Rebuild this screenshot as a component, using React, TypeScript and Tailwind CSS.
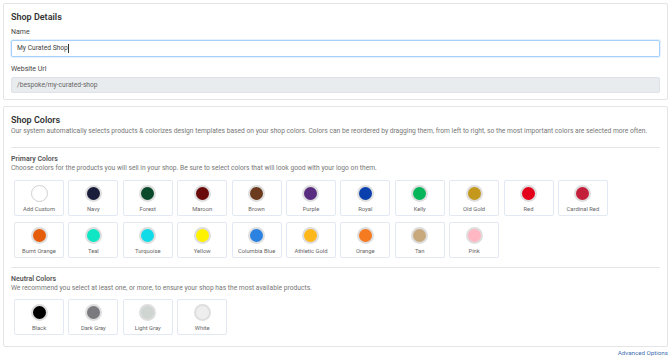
import React from 'react';

const primary = [
  { name: 'Navy', hex: '#1b1e3a' },
  { name: 'Forest', hex: '#0a4a2a' },
  { name: 'Maroon', hex: '#6a0b0b' },
  { name: 'Brown', hex: '#6c3a1c' },
  { name: 'Purple', hex: '#5a2c80' },
  { name: 'Royal', hex: '#0a40ad' },
  { name: 'Kelly', hex: '#06b45a' },
  { name: 'Old Gold', hex: '#c3981d' },
  { name: 'Red', hex: '#e2001a' },
  { name: 'Cardinal Red', hex: '#c31f3a' },
  { name: 'Burnt Orange', hex: '#e55c0a' },
  { name: 'Teal', hex: '#0fe6c4' },
  { name: 'Turquoise', hex: '#12dbe8' },
  { name: 'Yellow', hex: '#fff200' },
  { name: 'Columbia Blue', hex: '#2c82e0' },
  { name: 'Athletic Gold', hex: '#ffb81c' },
  { name: 'Orange', hex: '#f57a20' },
  { name: 'Tan', hex: '#c8a97e' },
  { name: 'Pink', hex: '#ffb7c3' },
];

const neutral = [
  { name: 'Black', hex: '#000000' },
  { name: 'Dark Gray', hex: '#7b7b7f' },
  { name: 'Light Gray', hex: '#cfd5d0' },
  { name: 'White', hex: '#eeeeee' },
];

function Swatch({ name, hex }: { name: string; hex?: string }) {
  return (
    <div className="w-[50px] h-[36px] border border-[#e3e9f3] rounded-[2px] bg-white flex flex-col items-center pt-[4px]">
      {hex ? (
        <span className="w-[17px] h-[17px] rounded-full border-[2px] border-[#dedede]" style={{ backgroundColor: hex }} />
      ) : (
        <span className="w-[17px] h-[17px] rounded-full border border-[#cfcfcf] bg-white" />
      )}
      <span className="mt-[3px] text-[5.8px] leading-[8px] text-[#666] whitespace-nowrap">{name}</span>
    </div>
  );
}

export default function App() {
  return (
    <div className="bg-white w-[670px] h-[358px] pl-[3px] pr-[2px] pt-[3px] text-[#333]" style={{ fontFamily: 'Roboto, "Liberation Sans", sans-serif' }}>
      {/* Shop details */}
      <div className="border border-[#e4e4e4] rounded-[2px] px-[7px] pt-[7px] pb-[6px]">
        <h2 className="text-[9px] leading-[12px] font-semibold text-[#333]">Shop Details</h2>
        <label className="block mt-[4px] text-[7px] leading-[10px] text-[#444]">Name</label>
        <div className="mt-[3px] h-[17px] border-[1.5px] border-[#a6d0fb] rounded-[2px] bg-white flex items-center px-[5px] shadow-[0_0_0_1px_rgba(120,180,250,0.2)]">
          <span className="text-[6.7px] text-[#444]">My Curated Shop</span>
          <span className="w-px h-[9px] bg-[#333]" />
        </div>
        <label className="block mt-[7px] text-[7px] leading-[10px] text-[#444]">Website Url</label>
        <div className="mt-[3px] h-[16px] border border-[#dfe2e6] rounded-[2px] bg-[#e9ecef] flex items-center px-[5px]">
          <span className="text-[6.7px] text-[#666]">/bespoke/my-curated-shop</span>
        </div>
      </div>

      {/* Shop colors */}
      <div className="mt-[6px] border border-[#e4e4e4] rounded-[2px] px-[7px] pt-[7px] pb-[11px]">
        <h2 className="text-[9px] leading-[12px] font-semibold text-[#333]">Shop Colors</h2>
        <p className="mt-[1px] text-[6.7px] leading-[9px] text-[#777]">
          Our system automatically selects products &amp; colorizes design templates based on your shop colors. Colors can be reordered by dragging them, from left to right, so the most important colors are selected more often.
        </p>
        <hr className="mt-[11px] border-[#e6e6e6]" />

        <h3 className="mt-[6px] text-[7px] leading-[10px] font-semibold text-[#555]">Primary Colors</h3>
        <p className="text-[6.7px] leading-[9px] text-[#777]">
          Choose colors for the products you will sell in your shop. Be sure to select colors that will look good with your logo on them.
        </p>
        <div className="mt-[7px] pl-[3px] flex flex-wrap gap-x-[4.4px] gap-y-[6px]">
          <Swatch name="Add Custom" />
          {primary.map(c => (
            <Swatch key={c.name} name={c.name} hex={c.hex} />
          ))}
        </div>
        <hr className="mt-[9px] border-[#e6e6e6]" />

        <h3 className="mt-[6px] text-[7px] leading-[10px] font-semibold text-[#555]">Neutral Colors</h3>
        <p className="text-[6.7px] leading-[9px] text-[#777]">
          We recommend you select at least one, or more, to ensure your shop has the most available products.
        </p>
        <div className="mt-[6px] pl-[3px] flex flex-wrap gap-x-[4.4px] gap-y-[6px]">
          {neutral.map(c => (
            <Swatch key={c.name} name={c.name} hex={c.hex} />
          ))}
        </div>
      </div>

      <div className="flex justify-end mt-[1px]">
        <a className="text-[6.2px] leading-[10px] text-[#3f6fb0]">Advanced Options</a>
      </div>
    </div>
  );
}
